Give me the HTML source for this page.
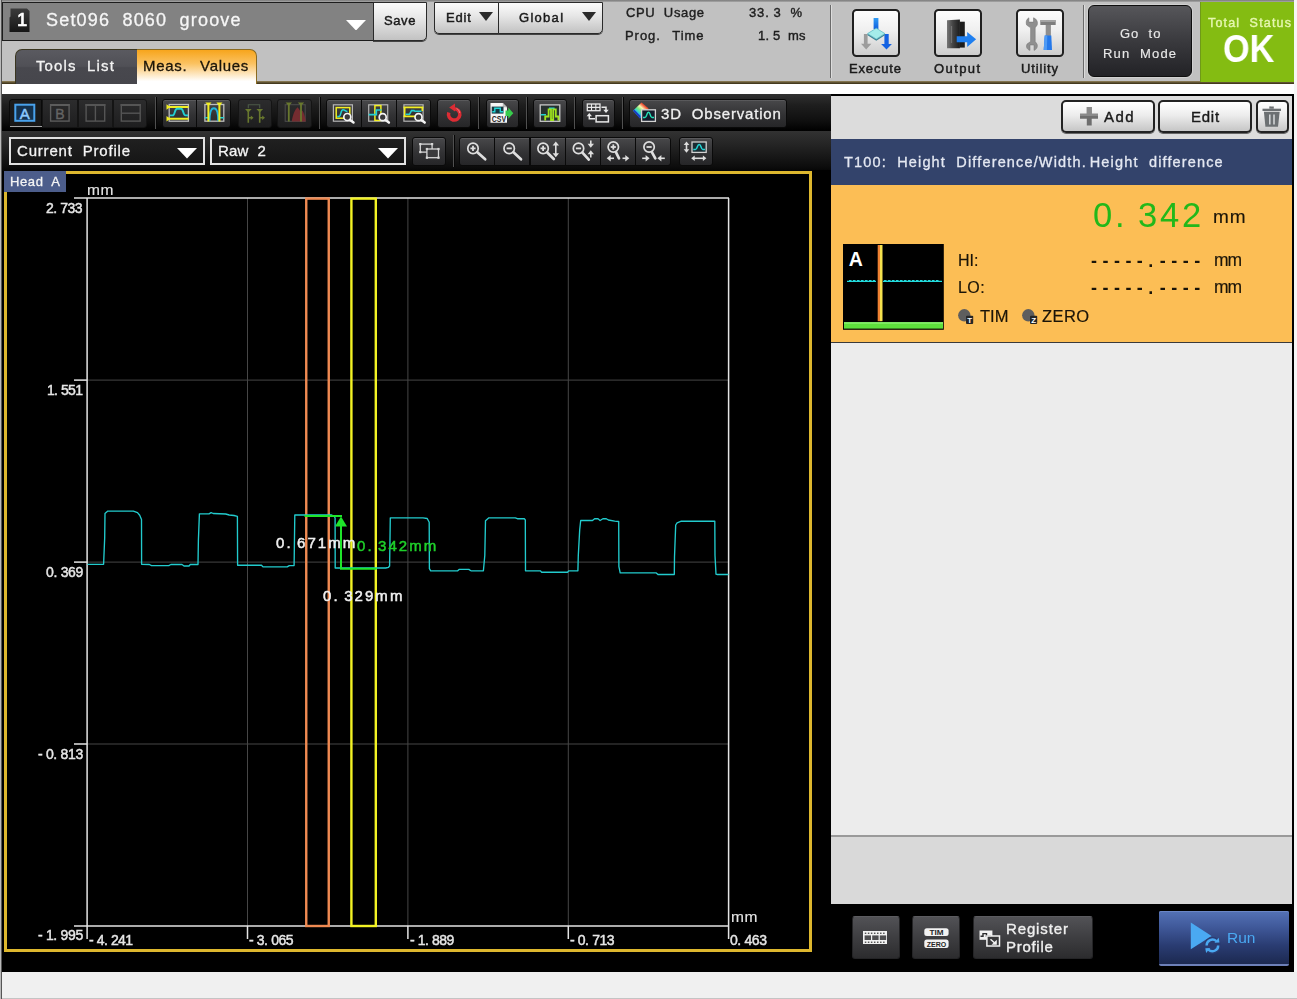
<!DOCTYPE html>
<html><head><meta charset="utf-8"><title>Meas. Values</title>
<style>
*{box-sizing:border-box;margin:0;padding:0}
html,body{width:1297px;height:999px;overflow:hidden}
body{position:relative;background:#c1c1c1;font-family:"Liberation Sans",sans-serif;color:#111;font-size:13px}
.a{position:absolute}
.t{position:absolute;white-space:pre;line-height:1;will-change:transform}
.t i.p{display:inline-block;width:0;height:0}
.lb{border:1px solid #2a2a2a;background:linear-gradient(#fbfbfb,#e8e8e8 40%,#c2c2c2 100%);box-shadow:0 1px 0 #444}
.dk{border:1px solid #0a0a0a;border-radius:3px;background:linear-gradient(#48484a,#323234 55%,#262628);box-shadow:inset 0 1px 0 rgba(255,255,255,.10)}
.dks{border:1px solid #0a0a0a;border-radius:3px;background:linear-gradient(#1c1c1c,#181818)}
.dkd{border:1px solid #141414;border-radius:3px;background:linear-gradient(#2c2c2d,#242425 55%,#1e1e1f)}
.sep{width:2px;background:linear-gradient(90deg,#505050 50%,#060606 50%)}
svg text{font-family:"Liberation Sans",sans-serif}
</style></head><body>
<div class="a" style="left:0px;top:0px;width:1297px;height:82px;background:#c1c1c1"></div>
<div class="a" style="left:0px;top:0px;width:1297px;height:2px;background:linear-gradient(#7a7a7a,#a8a8a8)"></div>
<div class="a" style="left:0px;top:81px;width:1297px;height:3px;background:linear-gradient(#94845c,#4a3f22 70%,#3e3418)"></div>
<div class="a" style="left:2px;top:84px;width:1295px;height:10px;background:#fff"></div>
<div class="a" style="left:2px;top:1.5px;width:372.2px;height:39.5px;background:#828282;border:1px solid #1c1c1c;border-width:1.5px 1px 1.5px 1.5px"></div>
<svg class="a" style="left:9px;top:8px" width="21" height="24.5" viewBox="0 0 21 24.5"><defs><linearGradient id="cd" x1="0" y1="0" x2="0" y2="1"><stop offset="0" stop-color="#3c3c3c"/><stop offset="1" stop-color="#161616"/></linearGradient></defs><path d="M1.500 .5H18L20.500 3V24H.5V9.500L1.500 8.500Z" fill="url(#cd)"/></svg>
<div class="t" style="left:16.60px;top:11.34px;font-size:18.5px;letter-spacing:0.00px;color:#fff;-webkit-text-stroke:0.7px #fff;">1</div>
<div class="t" style="left:46.00px;top:11.46px;font-size:18px;letter-spacing:1.18px;color:#f6f6f6;-webkit-text-stroke:0.3px #f6f6f6;">Set096  8060  groove</div>
<svg class="a" style="left:346px;top:19.5px" width="20" height="10.5" viewBox="0 0 20 10.5"><path d="M0 0H20L10 10.5Z" fill="#fff"/></svg>
<div class="a lb" style="left:372.7px;top:1.5px;width:54.3px;height:39.5px;border-radius:0 0 5px 0;border-width:1.5px"></div>
<div class="t" style="left:384.40px;top:13.90px;font-size:13px;letter-spacing:0.59px;color:#1a1a1a;-webkit-text-stroke:0.45px #1a1a1a;">Save</div>
<div class="a lb" style="left:434px;top:2px;width:65px;height:32px;border-radius:0 0 0 5px;border-width:1.5px 1px 1.5px 1.5px"></div>
<div class="a lb" style="left:498px;top:2px;width:105px;height:32px;border-radius:0 0 5px 0;border-width:1.5px 1.5px 1.5px 1px"></div>
<div class="t" style="left:445.60px;top:11.00px;font-size:13px;letter-spacing:0.82px;color:#1a1a1a;-webkit-text-stroke:0.45px #1a1a1a;">Edit</div>
<div class="t" style="left:519.30px;top:11.00px;font-size:13px;letter-spacing:1.29px;color:#1a1a1a;-webkit-text-stroke:0.45px #1a1a1a;">Global</div>
<svg class="a" style="left:479px;top:12px" width="14" height="9" viewBox="0 0 14 9"><path d="M0 0H14L7 9Z" fill="#2a2a2a"/></svg>
<svg class="a" style="left:582px;top:12px" width="14" height="9" viewBox="0 0 14 9"><path d="M0 0H14L7 9Z" fill="#2a2a2a"/></svg>
<div class="t" style="left:625.60px;top:6.30px;font-size:13px;letter-spacing:0.64px;color:#1e1e1e;-webkit-text-stroke:0.4px #1e1e1e;">CPU  Usage</div>
<div class="t" style="left:749.00px;top:6.30px;font-size:13px;letter-spacing:0.84px;color:#1e1e1e;-webkit-text-stroke:0.4px #1e1e1e;">33.<i class="p" style="margin-right:3.90px"></i>3  %</div>
<div class="t" style="left:625.00px;top:28.70px;font-size:13px;letter-spacing:0.94px;color:#1e1e1e;-webkit-text-stroke:0.4px #1e1e1e;">Prog.<i class="p" style="margin-right:2.60px"></i>  Time</div>
<div class="t" style="left:758.00px;top:28.70px;font-size:13px;letter-spacing:0.18px;color:#1e1e1e;-webkit-text-stroke:0.4px #1e1e1e;">1.<i class="p" style="margin-right:3.90px"></i>5  ms</div>
<div class="a" style="left:830px;top:5px;width:2px;height:73px;background:linear-gradient(90deg,#6a6a6a 50%,#dcdcdc 50%)"></div>
<div class="a" style="left:1083px;top:5px;width:2px;height:73px;background:linear-gradient(90deg,#6a6a6a 50%,#dcdcdc 50%)"></div>
<div class="a" style="left:851.5px;top:9px;width:48px;height:48px;border-radius:4.5px;border:2px solid #202020;background:linear-gradient(#fdfdfd,#efefef 45%,#cdcdcd)"></div>
<div class="a" style="left:933.5px;top:9px;width:48px;height:48px;border-radius:4.5px;border:2px solid #202020;background:linear-gradient(#fdfdfd,#efefef 45%,#cdcdcd)"></div>
<div class="a" style="left:1015.5px;top:9px;width:48px;height:48px;border-radius:4.5px;border:2px solid #202020;background:linear-gradient(#fdfdfd,#efefef 45%,#cdcdcd)"></div>
<div class="t" style="left:849.40px;top:62.00px;font-size:13px;letter-spacing:0.83px;color:#1a1a1a;-webkit-text-stroke:0.45px #1a1a1a;">Execute</div>
<div class="t" style="left:934.00px;top:62.00px;font-size:13px;letter-spacing:1.40px;color:#1a1a1a;-webkit-text-stroke:0.45px #1a1a1a;">Output</div>
<div class="t" style="left:1021.00px;top:62.00px;font-size:13px;letter-spacing:0.87px;color:#1a1a1a;-webkit-text-stroke:0.45px #1a1a1a;">Utility</div>
<svg class="a" style="left:851.5px;top:9px" width="48" height="48" viewBox="0 0 48 48">
<defs><linearGradient id="bl" x1="0" y1="0" x2="0" y2="1"><stop offset="0" stop-color="#2f9cf4"/><stop offset="1" stop-color="#0f5ee0"/></linearGradient>
<linearGradient id="dv" x1="0" y1="0" x2="1" y2="0"><stop offset="0" stop-color="#777"/><stop offset=".45" stop-color="#444"/><stop offset="1" stop-color="#1c1c1c"/></linearGradient></defs>
<path d="M21.600 9h4.800v11h-4.800z" fill="url(#bl)"/>
<path d="M11.900 25h3.700v9.800h3.800l-5.200 5.600-5.200-5.600h2.900z" fill="#9c9c9c"/>
<path d="M32.400 25h4.300v10h3.200l-5.400 5.500-5.400-5.500h3.300z" fill="#1462e2"/>
<path d="M15.600 24.600l8.700 5.400 8.600-5.400v1.700l-8.600 5.400-8.700-5.400z" fill="#3d8496"/>
<path d="M24.300 19.200l8.600 5.400-8.600 5.400-8.700-5.400z" fill="#a4ecea" stroke="#62bcc6" stroke-width=".8"/>
</svg>
<svg class="a" style="left:933.5px;top:9px" width="48" height="48" viewBox="0 0 48 48">
<path d="M25.500 12.700h5.300v25.900h-5.300z" fill="#1c1c1c"/>
<path d="M13 11.200l12.900-.6v28.600H13z" fill="url(#dv)"/>
<path d="M17.500 17v17" stroke="#8a8a8a" stroke-width="1.200" opacity=".6"/>
<path d="M22.700 27.300h10.500v-4.300l8.900 7.300-8.900 7.800v-4.900H22.700z" fill="#1f7ff0"/>
</svg>
<svg class="a" style="left:1015.5px;top:9px" width="48" height="48" viewBox="0 0 48 48">
<path d="M12.900 8.800c-2.600 1.300-3.300 4.600-2.300 7.200l4 2.800v13.700l-3.600 2.600c-1.200 2.500-.3 5.300 3 6.300v-5.400h4v5.400c2.800-1 4-3.800 3-6.300l-1.800-2.600V18.800l2-2.800c.8-2.800-.2-5.900-3.700-7.200v4.300h-4.600z" fill="#8f8f8f" stroke="#707070" stroke-width=".5"/>
<path d="M24.300 11.100h15.400v4.900H24.300z" fill="#7e7e7e"/><path d="M24.300 11.100h15.400v1.800H24.300z" fill="#a8a8a8"/>
<path d="M29.700 16h5.200v11h-5.200z" fill="#8e8e8e"/>
<path d="M28.700 26.500h6.600l.7 14.600h-8.300z" fill="#2478ea"/><path d="M28.700 26.500h2.600l-.4 14.600h-3.200z" fill="#4e9af4"/>
</svg>
<div class="a" style="left:1088px;top:5.3px;width:104.3px;height:72.2px;border-radius:6px;border:1.5px solid #0e0e0e;background:linear-gradient(#56565a,#3a3a3e 50%,#222226);box-shadow:0 0 0 1px rgba(255,255,255,.25)"></div>
<div class="t" style="left:1119.50px;top:26.60px;font-size:13px;letter-spacing:1.01px;color:#e8e8e8;-webkit-text-stroke:0.15px #e8e8e8;">Go  to</div>
<div class="t" style="left:1103.00px;top:46.80px;font-size:13px;letter-spacing:1.18px;color:#e8e8e8;-webkit-text-stroke:0.15px #e8e8e8;">Run  Mode</div>
<div class="a" style="left:1199.6px;top:1.5px;width:94.8px;height:80px;background:#84bc12;border-left:1px solid #6f9a18"></div>
<div class="t" style="left:1208.00px;top:16.72px;font-size:12.5px;letter-spacing:1.18px;color:#e6f7b0;-webkit-text-stroke:0.4px #e6f7b0;">Total  Status</div>
<div class="t" style="left:1222.50px;top:30.16px;font-size:38.8px;letter-spacing:0.00px;color:#fff;font-weight:bold;transform-origin:0 0;transform:scaleX(0.8814);">OK</div>
<div class="a" style="left:15px;top:49px;width:123px;height:35px;border-radius:7px 0 0 0;border:1.5px solid #3a3620;border-bottom:none;background:linear-gradient(#5a5a60,#505056 48%,#48484e 52%,#46464c)"></div>
<div class="a" style="left:137px;top:49px;width:120px;height:35px;border-radius:0 7px 0 0;border:1px solid #8a6a20;border-bottom:none;border-left:none;background:linear-gradient(#f7a51c,#fbc261 40%,#fff 92%)"></div>
<div class="t" style="left:36.00px;top:58.30px;font-size:15px;letter-spacing:1.11px;color:#f2f2f2;-webkit-text-stroke:0.3px #f2f2f2;">Tools  List</div>
<div class="t" style="left:142.70px;top:58.30px;font-size:15px;letter-spacing:0.70px;color:#1a1408;-webkit-text-stroke:0.3px #1a1408;">Meas.<i class="p" style="margin-right:3.00px"></i>  Values</div>
<div class="a" style="left:2px;top:94px;width:1292.4px;height:877.5px;background:#000"></div>
<div class="a" style="left:0px;top:971.5px;width:1297px;height:27.5px;background:#f0f0f0;border-bottom:1.5px solid #c4c4c4"></div>
<div class="a" style="left:0px;top:0px;width:2.4px;height:999px;background:linear-gradient(90deg,#bababa 58%,#565656 58%)"></div>
<div class="a" style="left:1294.4px;top:0px;width:2.6px;height:971.5px;background:#f6f6f6"></div>
<div class="a" style="left:4px;top:171px;width:807.5px;height:781px;border:3px solid #ddb72e;background:#000"></div>
<div class="a" style="left:4px;top:171px;width:62px;height:20.5px;background:#4c5d8b"></div>
<div class="t" style="left:10.00px;top:174.50px;font-size:13px;letter-spacing:0.62px;color:#f4f4f4;-webkit-text-stroke:0.3px #f4f4f4;">Head  A</div>
<svg class="a" style="left:0px;top:0px" width="830" height="960" viewBox="0 0 830 960"><path d="M247.5 198V926" stroke="#464646" stroke-width="1"/><path d="M407.9 198V926" stroke="#464646" stroke-width="1"/><path d="M568.3 198V926" stroke="#464646" stroke-width="1"/><path d="M87 380.1H729" stroke="#464646" stroke-width="1"/><path d="M87 562.1H729" stroke="#464646" stroke-width="1"/><path d="M87 744H729" stroke="#464646" stroke-width="1"/><path d="M74 198.100H729M74 926H729M87.100 198V939M728.600 198V939" stroke="#e4e4e4" stroke-width="1.500" fill="none"/><path d="M74 380.1H87" stroke="#e4e4e4" stroke-width="1.500"/><path d="M74 562.1H87" stroke="#e4e4e4" stroke-width="1.500"/><path d="M74 744H87" stroke="#e4e4e4" stroke-width="1.500"/><path d="M247.5 926V939" stroke="#e4e4e4" stroke-width="1.500"/><path d="M407.9 926V939" stroke="#e4e4e4" stroke-width="1.500"/><path d="M568.3 926V939" stroke="#e4e4e4" stroke-width="1.500"/><rect x="306.250" y="198.600" width="22.500" height="727.400" fill="none" stroke="#f08a52" stroke-width="2.400"/><rect x="351.400" y="198.600" width="24.400" height="727.400" fill="none" stroke="#f2f224" stroke-width="2.400"/><path d="M87.5 564.3L103.6 564.3L104.7 537.5L105 513.5L107.8 511.1L133.4 511.1L137.5 512.6L139.7 515.3L141.5 519.4L141.6 564.3L149.4 564.5L151.5 565.6L168.8 565.6L170.9 564.5L182 564.5L184 566L189 566L190.3 564.5L198 564.5L198.4 540L199.4 513.9L209 513.9L211.1 512.6L213.2 513.5L225.7 514L229.2 515L234 515.5L237.4 516.4L237.6 565.2L261.5 565.2L263 566.9L287.2 566.9L289.3 565.6L294.1 565.6L294.8 515L331.6 515L334.4 516.4L335.1 518L335.2 568L385.7 568L388.5 567.3L389.6 566L390.3 517.8L423 517.8L427.2 518.5L429.2 522.2L429.4 568.7L430.7 570.8L457.7 570.8L459.1 569.4L468.8 569.4L470.9 570.8L483.4 570.8L484.8 555.5L485.5 520.8L488.9 517.8L515.3 517.8L517.4 518.7L524.3 518.7L525.3 520L525.5 570.8L540.3 570.8L541.7 572.2L567.5 572.2L568.9 570.8L577.9 570.8L578.3 555.5L579.7 529.8L580.7 520.5L592.5 520.5L594.6 518.7L598 518.7L600.1 520.5L602.9 518.7L606.3 518.7L608.4 520L614.7 521.2L618.7 521.5L618.9 566.6L620.2 572.9L656.3 572.9L658 574.5L674.3 574.5L674.5 556.9L675.7 525L677.1 522.9L681.3 521.2L714.8 521.2L715 555.5L716 574.2L717.4 574.5L728.5 574.5" fill="none" stroke="#22cbcd" stroke-width="1.350" stroke-linejoin="round"/><path d="M304.500 516H342M341 526V568.700H376.700" fill="none" stroke="#1fe62a" stroke-width="2"/><path d="M341 516.400L347 526.600H335Z" fill="#1fe62a"/></svg>
<div class="t" style="left:86.90px;top:181.88px;font-size:15.5px;letter-spacing:0.59px;color:#e6e6e6;-webkit-text-stroke:0.15px #e6e6e6;">mm</div>
<div class="t" style="left:730.90px;top:909.08px;font-size:15.5px;letter-spacing:0.59px;color:#e6e6e6;-webkit-text-stroke:0.15px #e6e6e6;">mm</div>
<div class="t" style="left:46.40px;top:200.55px;font-size:14px;letter-spacing:-0.53px;color:#e6e6e6;-webkit-text-stroke:0.45px #e6e6e6;">2.<i class="p" style="margin-right:3.64px"></i>733</div>
<div class="t" style="left:47.00px;top:382.55px;font-size:14px;letter-spacing:-0.68px;color:#e6e6e6;-webkit-text-stroke:0.45px #e6e6e6;">1.<i class="p" style="margin-right:3.64px"></i>551</div>
<div class="t" style="left:45.80px;top:564.65px;font-size:14px;letter-spacing:-0.33px;color:#e6e6e6;-webkit-text-stroke:0.45px #e6e6e6;">0.<i class="p" style="margin-right:3.64px"></i>369</div>
<div class="t" style="left:37.80px;top:746.55px;font-size:14px;letter-spacing:-0.35px;color:#e6e6e6;-webkit-text-stroke:0.45px #e6e6e6;">-<i class="p" style="margin-right:3.64px"></i>0.<i class="p" style="margin-right:3.64px"></i>813</div>
<div class="t" style="left:37.80px;top:928.45px;font-size:14px;letter-spacing:-0.35px;color:#e6e6e6;-webkit-text-stroke:0.45px #e6e6e6;">-<i class="p" style="margin-right:3.64px"></i>1.<i class="p" style="margin-right:3.64px"></i>995</div>
<div class="t" style="left:88.50px;top:932.95px;font-size:14px;letter-spacing:-0.57px;color:#e6e6e6;-webkit-text-stroke:0.45px #e6e6e6;">-<i class="p" style="margin-right:3.64px"></i>4.<i class="p" style="margin-right:3.64px"></i>241</div>
<div class="t" style="left:249.00px;top:932.95px;font-size:14px;letter-spacing:-0.49px;color:#e6e6e6;-webkit-text-stroke:0.45px #e6e6e6;">-<i class="p" style="margin-right:3.64px"></i>3.<i class="p" style="margin-right:3.64px"></i>065</div>
<div class="t" style="left:409.70px;top:932.95px;font-size:14px;letter-spacing:-0.53px;color:#e6e6e6;-webkit-text-stroke:0.45px #e6e6e6;">-<i class="p" style="margin-right:3.64px"></i>1.<i class="p" style="margin-right:3.64px"></i>889</div>
<div class="t" style="left:570.00px;top:932.95px;font-size:14px;letter-spacing:-0.49px;color:#e6e6e6;-webkit-text-stroke:0.45px #e6e6e6;">-<i class="p" style="margin-right:3.64px"></i>0.<i class="p" style="margin-right:3.64px"></i>713</div>
<div class="t" style="left:730.30px;top:933.15px;font-size:14px;letter-spacing:-0.43px;color:#e6e6e6;-webkit-text-stroke:0.45px #e6e6e6;">0.<i class="p" style="margin-right:3.64px"></i>463</div>
<div class="t" style="left:276.20px;top:534.80px;font-size:15px;letter-spacing:2.04px;color:#f0f0f0;-webkit-text-stroke:0.5px #f0f0f0;">0.<i class="p" style="margin-right:4.50px"></i>671mm</div>
<div class="t" style="left:356.50px;top:537.50px;font-size:15px;letter-spacing:2.04px;color:#1fd02a;-webkit-text-stroke:0.5px #1fd02a;">0.<i class="p" style="margin-right:4.50px"></i>342mm</div>
<div class="t" style="left:323.10px;top:587.60px;font-size:15px;letter-spacing:2.06px;color:#f0f0f0;-webkit-text-stroke:0.5px #f0f0f0;">0.<i class="p" style="margin-right:4.50px"></i>329mm</div>
<div class="a" style="left:2px;top:94px;width:829px;height:36.5px;background:linear-gradient(#303030,#1e1e1e 30%,#0e0e0e 75%,#000 100%)"></div>
<div class="a" style="left:2px;top:130.5px;width:829px;height:40px;background:linear-gradient(#323232,#242424 35%,#0c0c0c 90%,#050505 100%)"></div>
<div class="a" style="left:812px;top:170px;width:19px;height:801px;background:#000"></div>
<div class="a dks" style="left:8.5px;top:98.5px;width:33.5px;height:29px;border-radius:3px 0 0 3px"></div>
<div class="a dkd" style="left:41.5px;top:98.5px;width:36.5px;height:29px;border-radius:0"></div>
<div class="a dkd" style="left:77.5px;top:98.5px;width:35.5px;height:29px;border-radius:0"></div>
<div class="a dkd" style="left:112.5px;top:98.5px;width:34.5px;height:29px;border-radius:0 3px 3px 0"></div>
<div class="a" style="left:9.5px;top:125.7px;width:32px;height:1.6px;background:#a4a4a4"></div>
<div class="a sep" style="left:154.5px;top:97px;width:2px;height:32px;"></div>
<div class="a dk" style="left:161.5px;top:98.5px;width:35px;height:29px;border-radius:3px 0 0 3px"></div>
<div class="a dk" style="left:196px;top:98.5px;width:34.5px;height:29px;border-radius:0 3px 3px 0"></div>
<div class="a dkd" style="left:237.5px;top:98.5px;width:34.5px;height:29px;border-radius:3px"></div>
<div class="a dkd" style="left:277px;top:98.5px;width:35px;height:29px;border-radius:3px"></div>
<div class="a sep" style="left:318.5px;top:97px;width:2px;height:32px;"></div>
<div class="a dk" style="left:326px;top:98.5px;width:35.5px;height:29px;border-radius:3px 0 0 3px"></div>
<div class="a dk" style="left:361px;top:98.5px;width:35.5px;height:29px;border-radius:0"></div>
<div class="a dk" style="left:396px;top:98.5px;width:35px;height:29px;border-radius:0 3px 3px 0"></div>
<div class="a dk" style="left:437px;top:98.5px;width:33.5px;height:29px;border-radius:3px"></div>
<div class="a sep" style="left:477.5px;top:97px;width:2px;height:32px;"></div>
<div class="a dk" style="left:485.5px;top:98.5px;width:33px;height:29px;border-radius:3px"></div>
<div class="a sep" style="left:525.5px;top:97px;width:2px;height:32px;"></div>
<div class="a dk" style="left:533px;top:98.5px;width:33.5px;height:29px;border-radius:3px"></div>
<div class="a sep" style="left:574px;top:97px;width:2px;height:32px;"></div>
<div class="a dk" style="left:581.5px;top:98.5px;width:33px;height:29px;border-radius:3px"></div>
<div class="a sep" style="left:621.5px;top:97px;width:2px;height:32px;"></div>
<div class="a dk" style="left:629px;top:99px;width:158px;height:28.5px;border-radius:3px"></div>
<div class="a" style="left:9.2px;top:136.8px;width:196px;height:28.4px;border:2px solid #e2e2e2;background:linear-gradient(#202020,#161616)"></div>
<div class="a" style="left:209.8px;top:136.8px;width:196.4px;height:28.4px;border:2px solid #e2e2e2;background:linear-gradient(#202020,#161616)"></div>
<div class="a dk" style="left:411.5px;top:136.5px;width:34px;height:29px;border-radius:3px"></div>
<div class="a sep" style="left:452.5px;top:135px;width:2px;height:32px;"></div>
<div class="a dk" style="left:459px;top:136.5px;width:35.5px;height:29px;border-radius:3px 0 0 3px"></div>
<div class="a dk" style="left:494px;top:136.5px;width:36px;height:29px;border-radius:0"></div>
<div class="a dk" style="left:529.5px;top:136.5px;width:36px;height:29px;border-radius:0"></div>
<div class="a dk" style="left:565px;top:136.5px;width:35.5px;height:29px;border-radius:0"></div>
<div class="a dk" style="left:600px;top:136.5px;width:35.5px;height:29px;border-radius:0"></div>
<div class="a dk" style="left:635px;top:136.5px;width:36px;height:29px;border-radius:0 3px 3px 0"></div>
<div class="a dk" style="left:678.5px;top:136.5px;width:34px;height:29px;border-radius:3px"></div>
<svg class="a" style="left:0;top:94px" width="831" height="77" viewBox="0 94 831 77"><rect x="15.300" y="104.700" width="19" height="16.100" fill="#14324e" stroke="#49a2ec" stroke-width="2"/><text x="24.800" y="118.600" font-size="15" fill="#8ccaff" stroke="#8ccaff" stroke-width=".5" text-anchor="middle">A</text><rect x="50.600" y="104.700" width="18.500" height="16.400" fill="none" stroke="#5c5c5c" stroke-width="1.400"/><path d="M50 105H69.700" stroke="#5c5c5c" stroke-width="2"/><text x="59.900" y="118.600" font-size="14" fill="#646464" stroke="#646464" stroke-width=".4" text-anchor="middle">B</text><rect x="86.100" y="104.700" width="18.600" height="16.400" fill="none" stroke="#555" stroke-width="1.400"/><path d="M85.400 105H105.400" stroke="#555" stroke-width="2"/><path d="M95.400 105V121" stroke="#555" stroke-width="1.400"/><rect x="121.300" y="104.700" width="18.900" height="16.400" fill="none" stroke="#555" stroke-width="1.400"/><path d="M120.600 105H140.900" stroke="#555" stroke-width="2"/><path d="M121.300 113.200H140.200" stroke="#555" stroke-width="1.400"/><rect x="169.200" y="104.500" width="19.200" height="16.700" fill="none" stroke="#bdbdbd" stroke-width="1.300"/><path d="M168 107H188.600M168 118.700H188.600" stroke="#f2ee22" stroke-width="2"/><path d="M166.500 104.300L170.300 107L166.500 109.700ZM166.500 116L170.300 118.700L166.500 121.400Z" fill="#f2ee22"/><path d="M170 115.400H172.500C175.200 115.400 174.300 108.800 177.200 108.800H181C183.700 108.800 182.800 115.400 185.500 115.400H188" fill="none" stroke="#22cfd2" stroke-width="1.900"/><rect x="204.900" y="104.500" width="18.900" height="16.700" fill="none" stroke="#bdbdbd" stroke-width="1.300"/><path d="M204.900 117.800H208.400M219.400 117.800H223.800" stroke="#22cfd2" stroke-width="1.500"/><path d="M209.500 121.200C209.500 112 210.800 108.200 213.900 108.200S218.300 112 218.300 121.200" fill="none" stroke="#22b4dc" stroke-width="1.900"/><path d="M208.400 103V121.500M219.400 103V121.500" stroke="#f2ee22" stroke-width="2"/><path d="M205.300 102.400H211.500L208.400 106ZM216.300 102.400H222.500L219.400 106Z" fill="#f2ee22"/><path d="M248.300 108.300V104.700H259.700V108.300" fill="none" stroke="#4c5a48" stroke-width="1.100"/><path d="M245 109H251.700L248.300 112.600ZM256.400 109H263.100L259.700 112.600Z" fill="#69782e"/><path d="M248.300 111V122.800M259.700 111V122.800M248.300 117.800H251.500M259.700 117.800H262.900" stroke="#69782e" stroke-width="1.600" fill="none"/><path d="M250.800 115.600L253.600 117.800L250.800 120ZM262.200 115.600L265 117.800L262.200 120Z" fill="#69782e"/><rect x="285.200" y="104.700" width="20" height="16.600" fill="none" stroke="#4a4a4a" stroke-width="1.100"/><path d="M291.800 121.500C292.500 116 294.500 110 297.500 107.300C299 109 300 111 301 112L302.500 110.500C304 113 305.300 117 305.800 121.500Z" fill="#742c30"/><path d="M288.800 103V121.500M301 103V121.500" stroke="#69782e" stroke-width="1.800"/><path d="M285.600 102.400H292L288.800 106ZM297.800 102.400H304.200L301 106Z" fill="#69782e"/><rect x="333.400" y="104.800" width="19" height="16.400" fill="none" stroke="#b5b5b5" stroke-width="1.200"/><rect x="336.200" y="107.600" width="13.600" height="10.600" fill="none" stroke="#f2ee22" stroke-width="1.500"/><path d="M337.200 116.500H339C341 116.500 340.600 109.800 343 109.800S345 111.500 347.500 111.500" fill="none" stroke="#22cfd2" stroke-width="1.600"/><circle cx="347.3" cy="117" r="3.500" fill="#38383a" stroke="#f4f4f4" stroke-width="1.700"/><path d="M350.2 119.9L353.5 122.4" stroke="#f4f4f4" stroke-width="2.500" stroke-linecap="round"/><rect x="368.700" y="104.800" width="19" height="16.400" fill="none" stroke="#b5b5b5" stroke-width="1.200"/><rect x="374.900" y="105.600" width="6" height="14.800" fill="none" stroke="#f2ee22" stroke-width="1.500"/><path d="M368.700 114.700H376.300V110H381.500" fill="none" stroke="#22cfd2" stroke-width="1.700"/><circle cx="382.7" cy="117.2" r="3.500" fill="#38383a" stroke="#f4f4f4" stroke-width="1.700"/><path d="M385.6 120.1L388.9 122.6" stroke="#f4f4f4" stroke-width="2.500" stroke-linecap="round"/><rect x="403.900" y="104.800" width="19.200" height="16.400" fill="none" stroke="#b5b5b5" stroke-width="1.200"/><path d="M403.500 107.300H423.300M403.500 116.300H415" stroke="#f2ee22" stroke-width="1.800"/><path d="M404.700 107V116.500M422.300 107V111" stroke="#f2ee22" stroke-width="1.600"/><path d="M405.500 114.300H409.500L411.500 110.600H414L415 111.300H421.500" fill="none" stroke="#22cfd2" stroke-width="1.600"/><circle cx="418.5" cy="117.2" r="3.500" fill="#38383a" stroke="#f4f4f4" stroke-width="1.700"/><path d="M421.4 120.1L424.7 122.6" stroke="#f4f4f4" stroke-width="2.500" stroke-linecap="round"/><path d="M454.200 108.700A5.700 5.700 0 1 1 448.800 112.500" fill="none" stroke="#dc2c34" stroke-width="3.500"/><path d="M455 103.600L449.200 107.600L455 111.400Z" fill="#dc2c34"/><path d="M456.500 108.400A5.700 5.700 0 0 1 459.800 113" fill="none" stroke="#f58a90" stroke-width="1" opacity=".8"/><path d="M490.500 103H502.800L507 107.200V122.800H490.500Z" fill="#f6f6f6"/><path d="M502.800 103V107.200H507Z" fill="#b8b8b8"/><rect x="491.700" y="106.600" width="11.800" height="7" fill="#173a42"/><path d="M492.300 111.700H494.800V108.300H500.300V111.700H503.300" fill="none" stroke="#22d6d6" stroke-width="1.400"/><text x="499" y="121.600" font-size="8.500" font-weight="bold" fill="#262626" text-anchor="middle" textLength="14.300" lengthAdjust="spacingAndGlyphs">CSV</text><path d="M505.500 110.500H508.300V107.600L513.300 113.200L508.300 118.800V115.900H505.500Z" fill="#38cc4c"/><rect x="540.200" y="104.900" width="19.600" height="16.400" fill="#26302f" stroke="#c9c9c9" stroke-width="1.300"/><path d="M540.800 114.700H546M549 108.200H554.600" stroke="#22d0d0" stroke-width="1.500"/><path d="M545.200 120.600V116.500H548.600V109.300H551V120H553.200V109.300H555.800V116.500H558.400V120.600" fill="none" stroke="#9fe21e" stroke-width="1.800"/><rect x="587.300" y="104" width="12.700" height="6.700" fill="none" stroke="#e9e9e9" stroke-width="1.300"/><path d="M591.500 104V110.700M595.800 104V110.700M587.300 107.400H600" stroke="#e9e9e9" stroke-width="1.100"/><rect x="596.100" y="115.700" width="12.300" height="6.200" fill="none" stroke="#e9e9e9" stroke-width="1.500"/><path d="M601.500 107.200H606V110.500" fill="none" stroke="#e9e9e9" stroke-width="1.500"/><path d="M603.300 109.800H608.700L606 113Z" fill="#e9e9e9"/><path d="M595 118.800H589.300V115.500" fill="none" stroke="#e9e9e9" stroke-width="1.500"/><path d="M586.600 116.200H592L589.300 113Z" fill="#e9e9e9"/><defs><linearGradient id="rb" gradientUnits="userSpaceOnUse" x1="634" y1="116" x2="645" y2="103"><stop offset="0" stop-color="#1c44d8"/><stop offset=".3" stop-color="#28c8e8"/><stop offset=".5" stop-color="#7cf07c"/><stop offset=".66" stop-color="#fbf6b4"/><stop offset=".86" stop-color="#f04a30"/><stop offset="1" stop-color="#f08a3a"/></linearGradient></defs><path d="M633 110.800L641.500 102.500L648.600 108.400L640 118.500Z" fill="url(#rb)"/><path d="M633 110.800L640 118.500L640.500 116L634.500 109.800Z" fill="#1c3cc0"/><rect x="641.600" y="109.800" width="13.800" height="11.600" fill="#141c2c" stroke="#d4d4d4" stroke-width="1.300"/><path d="M643 117.500H645C647 117.500 646.500 112.200 648.500 112.200S650 117.500 652 117.500H654" fill="none" stroke="#24e2b8" stroke-width="1.500"/><rect x="420.300" y="144.100" width="11.800" height="8" fill="none" stroke="#d6d6d6" stroke-width="1.300"/><rect x="426.900" y="149" width="11.600" height="8.700" fill="#3a3a3c" stroke="#d6d6d6" stroke-width="1.300"/><rect x="419.2" y="143" width="2.200" height="2.200" fill="#d6d6d6"/><rect x="431" y="143" width="2.200" height="2.200" fill="#d6d6d6"/><rect x="419.2" y="151" width="2.200" height="2.200" fill="#d6d6d6"/><rect x="425.8" y="147.9" width="2.200" height="2.200" fill="#d6d6d6"/><rect x="437.4" y="147.9" width="2.200" height="2.200" fill="#d6d6d6"/><rect x="425.8" y="156.6" width="2.200" height="2.200" fill="#d6d6d6"/><rect x="437.4" y="156.6" width="2.200" height="2.200" fill="#d6d6d6"/><circle cx="473" cy="148.4" r="5.2" fill="none" stroke="#dedede" stroke-width="1.700"/><path d="M470.4 148.4H475.6" stroke="#dedede" stroke-width="1.800"/><path d="M473 145.8V151" stroke="#dedede" stroke-width="1.800"/><path d="M477.325 152.264L485.2 159.3" stroke="#dedede" stroke-width="2.700" stroke-linecap="round"/><circle cx="509.2" cy="148.4" r="5.2" fill="none" stroke="#dedede" stroke-width="1.700"/><path d="M506.6 148.4H511.8" stroke="#dedede" stroke-width="1.800"/><path d="M513.46 152.336L521 159.3" stroke="#dedede" stroke-width="2.700" stroke-linecap="round"/><circle cx="543.1" cy="148.4" r="5.2" fill="none" stroke="#dedede" stroke-width="1.700"/><path d="M540.5 148.4H545.7" stroke="#dedede" stroke-width="1.800"/><path d="M543.1 145.8V151" stroke="#dedede" stroke-width="1.800"/><path d="M547.22 152.482L553.8 159" stroke="#dedede" stroke-width="2.700" stroke-linecap="round"/><path d="M555.8 144.6L555.8 154" stroke="#dedede" stroke-width="1.600"/><path d="M555.8 157.2L552.6 153.2L559 153.2Z" fill="#dedede"/><path d="M555.8 141.4L552.6 145.4L559 145.4Z" fill="#dedede"/><circle cx="578.5" cy="148.4" r="5.2" fill="none" stroke="#dedede" stroke-width="1.700"/><path d="M575.9 148.4H581.1" stroke="#dedede" stroke-width="1.800"/><path d="M582.426 152.669L588.8 159.6" stroke="#dedede" stroke-width="2.700" stroke-linecap="round"/><path d="M590.8 140.6L590.8 144.6" stroke="#dedede" stroke-width="1.600"/><path d="M590.8 147.8L587.6 143.8L594 143.8Z" fill="#dedede"/><path d="M590.8 157.4L590.8 153.4" stroke="#dedede" stroke-width="1.600"/><path d="M590.8 150.2L594 154.2L587.6 154.2Z" fill="#dedede"/><circle cx="613.3" cy="147" r="5.2" fill="none" stroke="#dedede" stroke-width="1.700"/><path d="M610.7 147H615.9" stroke="#dedede" stroke-width="1.800"/><path d="M613.3 144.4V149.6" stroke="#dedede" stroke-width="1.800"/><path d="M615.912 152.178L619 158.3" stroke="#dedede" stroke-width="2.700" stroke-linecap="round"/><path d="M614 158.3L609.9 158.3" stroke="#dedede" stroke-width="1.600"/><path d="M606.7 158.3L610.7 155.1L610.7 161.5Z" fill="#dedede"/><path d="M622.5 158.3L626.1 158.3" stroke="#dedede" stroke-width="1.600"/><path d="M629.3 158.3L625.3 161.5L625.3 155.1Z" fill="#dedede"/><circle cx="649.1" cy="147" r="5.2" fill="none" stroke="#dedede" stroke-width="1.700"/><path d="M646.5 147H651.7" stroke="#dedede" stroke-width="1.800"/><path d="M651.89 152.085L655.3 158.3" stroke="#dedede" stroke-width="2.700" stroke-linecap="round"/><path d="M642.2 158.3L646.4 158.3" stroke="#dedede" stroke-width="1.600"/><path d="M649.6 158.3L645.6 161.5L645.6 155.1Z" fill="#dedede"/><path d="M664.8 158.3L660.6 158.3" stroke="#dedede" stroke-width="1.600"/><path d="M657.4 158.3L661.4 155.1L661.4 161.5Z" fill="#dedede"/><rect x="692" y="142" width="14.200" height="10.400" fill="#1a2c32" stroke="#d2d2d2" stroke-width="1.300"/><path d="M693.300 149.500H695.500C697.500 149.500 697 144.500 699.200 144.500S700.800 149.500 702.800 149.500H705" fill="none" stroke="#24d6d6" stroke-width="1.500"/><path d="M686.5 144.2L686.5 150" stroke="#dedede" stroke-width="1.600"/><path d="M686.5 152.8L683.7 149.3L689.3 149.3Z" fill="#dedede"/><path d="M686.5 141.4L683.7 144.9L689.3 144.9Z" fill="#dedede"/><path d="M694 158.3L703.6 158.3" stroke="#dedede" stroke-width="1.600"/><path d="M706.4 158.3L702.9 161.1L702.9 155.5Z" fill="#dedede"/><path d="M691.2 158.3L694.7 161.1L694.7 155.5Z" fill="#dedede"/></svg>
<div class="t" style="left:660.90px;top:105.50px;font-size:15px;letter-spacing:0.82px;color:#f0f0f0;-webkit-text-stroke:0.3px #f0f0f0;">3D  Observation</div>
<div class="t" style="left:17.30px;top:143.30px;font-size:15px;letter-spacing:0.81px;color:#f4f4f4;-webkit-text-stroke:0.3px #f4f4f4;">Current  Profile</div>
<div class="t" style="left:218.30px;top:143.30px;font-size:15px;letter-spacing:0.21px;color:#f4f4f4;-webkit-text-stroke:0.3px #f4f4f4;">Raw  2</div>
<svg class="a" style="left:177px;top:148.2px" width="20" height="10.5" viewBox="0 0 20 10.5"><path d="M0 0H20L10 10.500Z" fill="#fff"/></svg>
<svg class="a" style="left:377.8px;top:148.2px" width="20" height="10.5" viewBox="0 0 20 10.5"><path d="M0 0H20L10 10.500Z" fill="#fff"/></svg>
<div class="a" style="left:831px;top:96px;width:461px;height:42.5px;background:#dcdcdc"></div>
<div class="a" style="left:831px;top:138.5px;width:461px;height:46.5px;background:#33436b"></div>
<div class="a" style="left:831px;top:185px;width:461px;height:156.5px;background:#fcbe55"></div>
<div class="a" style="left:831px;top:341.5px;width:461px;height:1px;background:#3a3a3a"></div>
<div class="a" style="left:831px;top:342.5px;width:461px;height:492.5px;background:#ececec"></div>
<div class="a" style="left:831px;top:835px;width:461px;height:1.5px;background:#9a9a9a"></div>
<div class="a" style="left:831px;top:836.5px;width:461px;height:67px;background:#d9d9d9"></div>
<div class="a" style="left:1061px;top:100px;width:94px;height:33px;border-radius:5px;border:2px solid #222;background:linear-gradient(#ffffff,#ededed 45%,#c6c6c6);box-shadow:0 1px 0 #666"></div>
<div class="a" style="left:1158px;top:100px;width:94px;height:33px;border-radius:5px;border:2px solid #222;background:linear-gradient(#ffffff,#ededed 45%,#c6c6c6);box-shadow:0 1px 0 #666"></div>
<div class="a" style="left:1255.5px;top:100px;width:33px;height:33px;border-radius:5px;border:2px solid #222;background:linear-gradient(#ffffff,#ededed 45%,#c6c6c6);box-shadow:0 1px 0 #666"></div>
<svg class="a" style="left:1079.5px;top:107px" width="18.5" height="18.5" viewBox="0 0 18.5 18.5"><path d="M6.800 0H11.700V6.800H18.500V11.700H11.700V18.500H6.800V11.700H0V6.800H6.800Z" fill="#6e6e6e"/><path d="M6.800 0H11.700V6.800H18.500V9H0V6.800H6.800Z" fill="#8a8a8a"/></svg>
<div class="t" style="left:1104.40px;top:109.00px;font-size:15px;letter-spacing:1.45px;color:#1a1a1a;-webkit-text-stroke:0.4px #1a1a1a;">Add</div>
<div class="t" style="left:1190.60px;top:109.00px;font-size:15px;letter-spacing:0.74px;color:#1a1a1a;-webkit-text-stroke:0.4px #1a1a1a;">Edit</div>
<svg class="a" style="left:1255.5px;top:100px" width="33" height="33" viewBox="0 0 33 33">
<path d="M13.300 6.400h4.500v2.300h-4.500z" fill="#6c7072"/>
<path d="M6.500 8.700h18.500v2.300H6.500z" fill="#6c7072"/>
<path d="M7.900 11.800h15.800l-1.700 14.900H9.400z" fill="#6c7072"/>
<path d="M13.800 14.500v10M18 14.500v10" stroke="#d8dadc" stroke-width="1.500"/>
</svg>
<div class="t" style="left:843.50px;top:154.93px;font-size:14.5px;letter-spacing:1.15px;color:#e4e8f2;-webkit-text-stroke:0.3px #e4e8f2;">T100:  Height  Difference/Width.<i class="p" style="margin-right:2.90px"></i>Height  difference</div>
<div class="t" style="left:1092.50px;top:198.31px;font-size:34.6px;letter-spacing:2.84px;color:#22b81a;">0.<i class="p" style="margin-right:10.38px"></i>342</div>
<div class="t" style="left:1213.40px;top:206.72px;font-size:19px;letter-spacing:0.96px;color:#1a1408;-webkit-text-stroke:0.15px #1a1408;">mm</div>
<div class="t" style="left:1213.90px;top:252.49px;font-size:17.5px;letter-spacing:-1.04px;color:#1a1408;-webkit-text-stroke:0.15px #1a1408;">mm</div>
<div class="t" style="left:1213.90px;top:279.29px;font-size:17.5px;letter-spacing:-1.04px;color:#1a1408;-webkit-text-stroke:0.15px #1a1408;">mm</div>
<div class="t" style="left:957.70px;top:253.26px;font-size:16px;letter-spacing:0.06px;color:#1a1408;-webkit-text-stroke:0.2px #1a1408;">HI:</div>
<div class="t" style="left:957.70px;top:280.06px;font-size:16px;letter-spacing:0.42px;color:#1a1408;-webkit-text-stroke:0.2px #1a1408;">LO:</div>
<div class="t" style="left:979.90px;top:307.83px;font-size:16.5px;letter-spacing:0.01px;color:#1a1408;-webkit-text-stroke:0.2px #1a1408;">TIM</div>
<div class="t" style="left:1042.40px;top:307.83px;font-size:16.5px;letter-spacing:0.41px;color:#1a1408;-webkit-text-stroke:0.2px #1a1408;">ZERO</div>
<div class="t" style="left:1090.7px;top:251.76px;font-size:18px;font-weight:bold;color:#1a1408;letter-spacing:5.47px">-----<span style="letter-spacing:6.47px">.</span>----</div>
<div class="t" style="left:1090.7px;top:278.76px;font-size:18px;font-weight:bold;color:#1a1408;letter-spacing:5.47px">-----<span style="letter-spacing:6.47px">.</span>----</div>
<svg class="a" style="left:957.7px;top:309px" width="16" height="16" viewBox="0 0 16 16"><circle cx="6.300" cy="6.300" r="6.200" fill="#5e5e5e"/><rect x="8" y="6.800" width="7.200" height="8.200" rx="1" fill="#262626"/><text x="11.600" y="14" font-size="8" font-weight="bold" fill="#fff" text-anchor="middle">T</text></svg>
<svg class="a" style="left:1022.4px;top:309px" width="16" height="16" viewBox="0 0 16 16"><circle cx="6.300" cy="6.300" r="6.200" fill="#5e5e5e"/><rect x="8" y="6.800" width="7.200" height="8.200" rx="1" fill="#262626"/><text x="11.600" y="14" font-size="8" font-weight="bold" fill="#fff" text-anchor="middle">Z</text></svg>
<svg class="a" style="left:843px;top:244px" width="101" height="86" viewBox="0 0 101 86">
<rect x="0" y="0" width="100.800" height="85.800" fill="#000"/>
<rect x="1" y="78.200" width="99" height="6.400" fill="#5ee03c"/><rect x="1" y="78.200" width="99" height="1.500" fill="#8af070"/>
<rect x="34.700" y="1" width="2.500" height="76.200" fill="#f08232"/>
<rect x="37" y="1" width="2.500" height="76.200" fill="#f6e24e"/>
<path d="M4 37.300H33M40 37.300H99" fill="none" stroke="#22dadc" stroke-width="1.300"/>
<path d="M6 36.500H32M41 36.500H97" fill="none" stroke="#22dadc" stroke-width="1" stroke-dasharray="2.500 1.500"/>
<text x="12.700" y="21.700" font-size="19.500" font-weight="bold" fill="#fff" text-anchor="middle">A</text>
</svg>
<div class="a" style="left:851.5px;top:915.5px;width:48px;height:43.5px;border-radius:3px;border:1px solid #242426;border-top-color:#5c5c60;background:linear-gradient(#525256,#3e3e41 50%,#2c2c2e)"></div>
<div class="a" style="left:912px;top:915.5px;width:48px;height:43.5px;border-radius:3px;border:1px solid #242426;border-top-color:#5c5c60;background:linear-gradient(#525256,#3e3e41 50%,#2c2c2e)"></div>
<div class="a" style="left:972.5px;top:915.5px;width:120.5px;height:43.5px;border-radius:3px;border:1px solid #242426;border-top-color:#5c5c60;background:linear-gradient(#525256,#3e3e41 50%,#2c2c2e)"></div>
<div class="t" style="left:1006.00px;top:921.30px;font-size:15px;letter-spacing:0.86px;color:#efefef;-webkit-text-stroke:0.35px #efefef;">Register</div>
<div class="t" style="left:1006.00px;top:938.60px;font-size:15px;letter-spacing:0.71px;color:#efefef;-webkit-text-stroke:0.35px #efefef;">Profile</div>
<svg class="a" style="left:863px;top:931px" width="24.2" height="13.4" viewBox="0 0 24.2 13.4"><rect x="0" y="0" width="24.200" height="13.400" fill="#f1f1f1"/><rect x="1.6" y="4.400" width="6.400" height="4.600" fill="#4e4e50"/><rect x="9.2" y="4.400" width="6.400" height="4.600" fill="#4e4e50"/><rect x="16.8" y="4.400" width="6.400" height="4.600" fill="#4e4e50"/><rect x="1.8" y="1.6" width="1.500" height="1.300" fill="#444"/><rect x="1.8" y="10.6" width="1.500" height="1.300" fill="#444"/><rect x="4.85" y="1.6" width="1.500" height="1.300" fill="#444"/><rect x="4.85" y="10.6" width="1.500" height="1.300" fill="#444"/><rect x="7.9" y="1.6" width="1.500" height="1.300" fill="#444"/><rect x="7.9" y="10.6" width="1.500" height="1.300" fill="#444"/><rect x="10.95" y="1.6" width="1.500" height="1.300" fill="#444"/><rect x="10.95" y="10.6" width="1.500" height="1.300" fill="#444"/><rect x="14" y="1.6" width="1.500" height="1.300" fill="#444"/><rect x="14" y="10.6" width="1.500" height="1.300" fill="#444"/><rect x="17.05" y="1.6" width="1.500" height="1.300" fill="#444"/><rect x="17.05" y="10.6" width="1.500" height="1.300" fill="#444"/><rect x="20.1" y="1.6" width="1.500" height="1.300" fill="#444"/><rect x="20.1" y="10.6" width="1.500" height="1.300" fill="#444"/></svg>
<svg class="a" style="left:923.5px;top:927.8px" width="25" height="20.5" viewBox="0 0 25 20.5"><rect x=".3" y=".2" width="24.300" height="7.800" rx="2.500" fill="#f2f2f2"/><rect x=".3" y="11.600" width="24.300" height="8.400" rx="2.500" fill="#f2f2f2"/><text x="12.500" y="7.200" font-size="8" font-weight="bold" fill="#262626" text-anchor="middle" textLength="14" lengthAdjust="spacingAndGlyphs">TIM</text><text x="12.500" y="18.900" font-size="8" font-weight="bold" fill="#262626" text-anchor="middle" textLength="19.500" lengthAdjust="spacingAndGlyphs">ZERO</text></svg>
<svg class="a" style="left:978.5px;top:930px" width="22" height="17" viewBox="0 0 22 17"><rect x=".5" y=".5" width="12.900" height="9.300" fill="#f2f2f2"/><path d="M1.500 6.200H4V3.600H7.500V6.200H12" fill="none" stroke="#2c2c2e" stroke-width="1.400"/><rect x="7.900" y="6" width="12.600" height="10" fill="#38383a" stroke="#f2f2f2" stroke-width="1.500"/><path d="M11.500 9.300L16.500 13.800" fill="none" stroke="#f2f2f2" stroke-width="1.500"/><path d="M17.800 9.800V14.800H12.500Z" fill="#f2f2f2"/></svg>
<div class="a" style="left:1158.5px;top:910.7px;width:130.1px;height:55.3px;border-radius:2px;background:linear-gradient(#5472b6,#40599a 30%,#2a3c72 65%,#1c2950 100%);border-bottom:2px solid #6d80b8;box-shadow:inset 0 1px 0 #6a86c6"></div>
<svg class="a" style="left:1190px;top:922px" width="34" height="34" viewBox="0 0 34 34"><path d="M.800 .600L21.600 13.900L.800 27.200Z" fill="#4aa9f2"/><circle cx="22.400" cy="23.400" r="8.500" fill="#2a3c72"/><path d="M16.600 23.400a5.800 5.800 0 0 1 9.800-4.200" fill="none" stroke="#4aa9f2" stroke-width="2.400"/><path d="M28.200 23.400a5.800 5.800 0 0 1-9.800 4.200" fill="none" stroke="#4aa9f2" stroke-width="2.400"/><path d="M24.500 20.800l5-.3-.8-4.800z" fill="#4aa9f2"/><path d="M20.300 26l-5 .3.800 4.800z" fill="#4aa9f2"/></svg>
<div class="t" style="left:1226.80px;top:929.78px;font-size:15.5px;letter-spacing:-0.02px;color:#4aa9f2;">Run</div>
</body></html>
